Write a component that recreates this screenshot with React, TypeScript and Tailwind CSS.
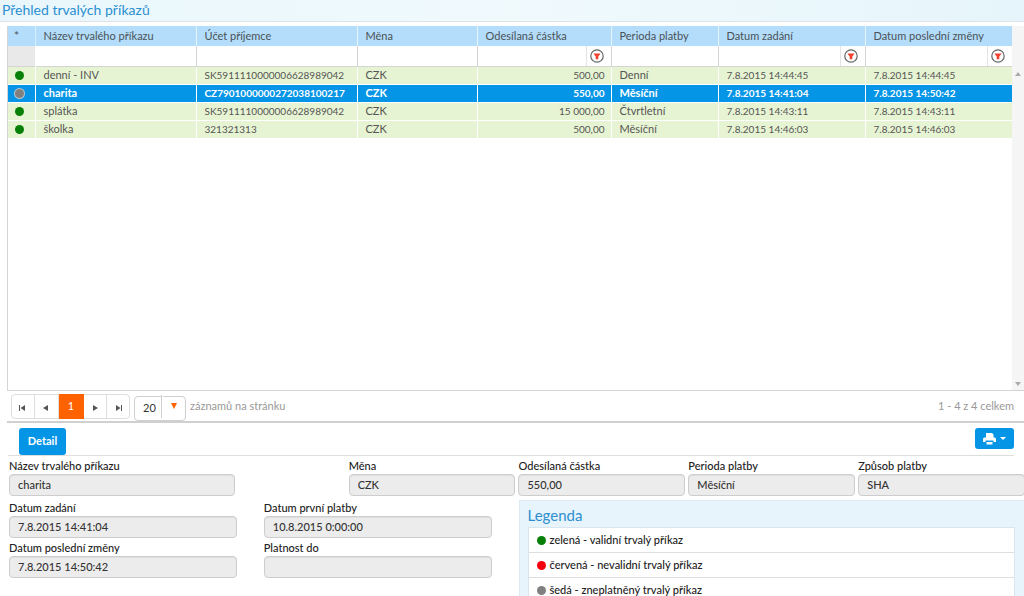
const columns = [
  { label: "Název trvalého příkazu", width: "w-[161px]", filter: false },
  { label: "Účet příjemce", width: "w-[161px]", filter: false },
  { label: "Měna", width: "w-[120px]", filter: false },
  { label: "Odesílaná částka", width: "w-[134px]", filter: true },
  { label: "Perioda platby", width: "w-[107px]", filter: false },
  { label: "Datum zadání", width: "w-[147px]", filter: true },
  { label: "Datum poslední změny", width: "w-[147px]", filter: true },
];

const orders = [
  { name: "denní - INV", account: "SK5911110000006628989042", currency: "CZK", amount: "500,00", period: "Denní", created: "7.8.2015 14:44:45", changed: "7.8.2015 14:44:45", valid: true, selected: false },
  { name: "charita", account: "CZ7901000000272038100217", currency: "CZK", amount: "550,00", period: "Měsíční", created: "7.8.2015 14:41:04", changed: "7.8.2015 14:50:42", valid: false, selected: true },
  { name: "splátka", account: "SK5911110000006628989042", currency: "CZK", amount: "15 000,00", period: "Čtvrtletní", created: "7.8.2015 14:43:11", changed: "7.8.2015 14:43:11", valid: true, selected: false },
  { name: "školka", account: "321321313", currency: "CZK", amount: "500,00", period: "Měsíční", created: "7.8.2015 14:46:03", changed: "7.8.2015 14:46:03", valid: true, selected: false },
];

const legend = [
  { color: "bg-[#078007]", text: "zelená - validní trvalý příkaz" },
  { color: "bg-[#f5000c]", text: "červená - nevalidní trvalý příkaz" },
  { color: "bg-[#808080]", text: "šedá - zneplatněný trvalý příkaz" },
];

function FilterIcon() {
  return (
    <svg viewBox="0 0 14 14" className="size-[14px]" aria-hidden="true">
      <circle cx="7" cy="7" r="6.200" fill="#fff" stroke="#666" strokeWidth="1.200" />
      <path d="M3.400 4.600h7.200L8.300 7.400v2.800H5.700V7.400z" fill="#f4402c" />
    </svg>
  );
}

function PagerIcon({ d }: { d: string }) {
  return (
    <svg viewBox="0 0 8 8" className="size-2" aria-hidden="true">
      <path d={d} fill="#555" />
    </svg>
  );
}

function PagerButton({ label, d }: { label: string; d: string }) {
  return (
    <button type="button" aria-label={label} className="flex flex-1 items-center justify-center border-r border-[#dedede] pt-[3px] last:border-r-0">
      <PagerIcon d={d} />
    </button>
  );
}

function Field({ id, label, value, className = "", inputClass = "w-full" }: { id: string; label: string; value: string; className?: string; inputClass?: string }) {
  return (
    <div className={className}>
      <label htmlFor={id} className="block text-[11px] leading-4 font-medium text-[#222]">
        {label}
      </label>
      <input
        id={id}
        readOnly
        value={value}
        className={`block h-[22px] rounded border border-[#cdcdcd] bg-[#ececec] px-2 pb-0.5 text-[11px] font-medium text-[#333] shadow-[inset_0_1px_1px_rgba(0,0,0,0.06)] ${inputClass}`}
      />
    </div>
  );
}

function OrdersTable() {
  return (
    <table className="w-full table-fixed border-collapse text-left text-[11px] text-[#555]">
      <thead>
        <tr className="h-5 bg-[#b3ddfa] text-[#4a5258]">
          <th className="w-[27px] border-r border-[#d9effd] p-0 pl-1.5 align-top text-[12px] leading-5 font-normal">*</th>
          {columns.map((c) => (
            <th key={c.label} className={`${c.width} border-r border-[#e6f4fe] p-0 pl-2 font-normal whitespace-nowrap`}>
              {c.label}
            </th>
          ))}
        </tr>
        <tr className="h-5 border-b border-[#d4d4d4]">
          <td className="bg-[#e9e9e9] p-0" />
          {columns.map((c) => (
            <td key={c.label} className="border-r border-[#d4d4d4] bg-white p-0">
              <div className="flex h-5">
                <input aria-label={`Filtr: ${c.label}`} className="min-w-0 flex-1 px-2 outline-none" />
                {c.filter && (
                  <button type="button" aria-label={`Filtrovat ${c.label}`} className="flex w-[25px] items-center justify-center border-l border-[#e4e4e4] pr-1">
                    <FilterIcon />
                  </button>
                )}
              </div>
            </td>
          ))}
        </tr>
      </thead>
      <tbody>
        {orders.map((o) => (
          <tr
            key={o.name}
            className={
              o.selected
                ? "h-[18px] border-b border-white bg-[#0595e6] font-bold text-white"
                : "h-[18px] border-b border-white bg-[#e7f4d3]"
            }
          >
            <td className="border-r border-white p-0 pl-[7px]">
              <span className={`block size-[9px] rounded-full ${o.valid ? "bg-[#078007]" : "bg-[#808080] ring-1 ring-[#b9c7d0]"}`} />
            </td>
            <td className="border-r border-white p-0 pl-2">{o.name}</td>
            <td className="border-r border-white p-0 pl-2 text-[10px]">{o.account}</td>
            <td className="border-r border-white p-0 pl-2">{o.currency}</td>
            <td className="border-r border-white p-0 pr-1.5 text-right text-[10px]">{o.amount}</td>
            <td className="border-r border-white p-0 pl-2">{o.period}</td>
            <td className="border-r border-white p-0 pl-2 text-[10px]">{o.created}</td>
            <td className="p-0 pl-2 text-[10px]">{o.changed}</td>
          </tr>
        ))}
      </tbody>
    </table>
  );
}

function Pager() {
  return (
    <div className="flex h-8 items-center border-b-2 border-[#d0d0d0] pr-2.5 pl-1">
      <nav aria-label="Stránkování" className="flex h-[25px] w-[119px] rounded-sm border border-[#dedede]">
        <PagerButton label="První" d="M0 1h1v6H0zM6 1v6L1.500 4z" />
        <PagerButton label="Předchozí" d="M6 1v6L1 4z" />
        <button type="button" aria-current="page" className="-my-px w-[25px] bg-[#ff6200] text-[11px] text-white">
          1
        </button>
        <PagerButton label="Další" d="M2 1v6l5-3z" />
        <PagerButton label="Poslední" d="M2 1v6l4.500-3zM7 1h1v6H7z" />
      </nav>
      <div className="relative ml-1 h-[25px] w-[52px]">
        <select id="page-size" defaultValue="20" className="size-full appearance-none rounded-sm border border-[#cfcfcf] bg-white pb-0.5 pl-2 text-[11px] text-[#333]">
          <option>20</option>
          <option>50</option>
        </select>
        <span className="pointer-events-none absolute inset-y-px right-px flex w-6 items-center justify-center border-x border-l-[#cfcfcf] border-r-transparent before:mr-auto before:h-full before:w-px before:bg-white">
          <svg viewBox="0 0 6 6" className="mr-auto size-1.5" aria-hidden="true">
            <path d="M0 0h6L3 6z" fill="#ff6200" />
          </svg>
        </span>
      </div>
      <label htmlFor="page-size" className="ml-1 text-[11px] text-[#999]">
        záznamů na stránku
      </label>
      <span className="ml-auto text-[11px] text-[#999]">1 - 4 z 4 celkem</span>
    </div>
  );
}

function Legend() {
  return (
    <section className="mt-1 w-1/2 border border-[#dbe9f2] bg-[#e8f4fc] pr-3 pl-2">
      <h2 className="pt-1 pb-0.5 text-[15px] leading-5 text-[#2b8fd0]">Legenda</h2>
      <ul className="border border-[#d9e6ee] bg-white">
        {legend.map((l) => (
          <li key={l.text} className="flex h-[25px] items-center gap-1 border-b border-[#dedede] pl-2 text-[11px] font-medium text-[#222] last:border-b-0">
            <span className={`size-[9px] rounded-full ${l.color}`} />
            {l.text}
          </li>
        ))}
      </ul>
    </section>
  );
}

export default function App() {
  return (
    <main className="h-screen overflow-hidden bg-white font-['Lato','Liberation_Sans',sans-serif]">
      <header className="h-[22px] border-b border-[#dfe3e5] bg-linear-to-r from-[#e9f7fc] via-[#f0fafd] to-[#e6f5fb] pl-0.5">
        <h1 className="text-[14px] leading-5 text-[#2b8fd0]">Přehled trvalých příkazů</h1>
      </header>

      <section className="mt-1 ml-[7px]">
        <div className="flex h-[365px] border-b border-l border-[#d4d4d4]">
          <div className="min-w-0 flex-1">
            <OrdersTable />
          </div>
          <div className="flex w-3 flex-col items-center justify-between bg-[#f5f5f5] pt-[46px] pb-1">
            <svg viewBox="0 0 6 4" className="w-1.5" aria-hidden="true">
              <path d="M0 4h6L3 0z" fill="#aaa" />
            </svg>
            <svg viewBox="0 0 6 4" className="w-1.5" aria-hidden="true">
              <path d="M0 0h6L3 4z" fill="#aaa" />
            </svg>
          </div>
        </div>
        <Pager />
      </section>

      <div className="mt-[5px] mr-2.5 ml-2 flex items-start justify-between border-b border-[#dedede] pl-[11px]">
        <button type="button" className="h-[27px] w-[47px] rounded-[3px] bg-[#0595e6] text-[11px] font-bold text-white">
          Detail
        </button>
        <button type="button" aria-label="Tisk" className="flex h-[21px] w-[39px] items-center justify-center gap-1 rounded-[3px] bg-[#0595e6]">
          <svg viewBox="0 0 13 12" className="w-[13px]" fill="#fff" aria-hidden="true">
            <path d="M3 0h6l1.500 1.500V4.500h-7.500zM1.500 4.500h10Q13 4.500 13 6v3h-2.500V7.500h-8V9H0V6q0-1.500 1.500-1.500zM3.500 9h6v2.500h-6z" />
          </svg>
          <svg viewBox="0 0 6 3" className="w-1.5" fill="#fff" aria-hidden="true">
            <path d="M0 0h6L3 3z" />
          </svg>
        </button>
      </div>

      <div className="-mr-1 ml-[9px] grid grid-cols-6 pt-0.5">
        <Field id="name" label="Název trvalého příkazu" value="charita" className="col-span-2" inputClass="w-2/3" />
        <Field id="currency" label="Měna" value="CZK" className="pr-[3px]" />
        <Field id="amount" label="Odesílaná částka" value="550,00" className="pr-[3px]" />
        <Field id="period" label="Perioda platby" value="Měsíční" className="pr-[3px]" />
        <Field id="method" label="Způsob platby" value="SHA" className="pr-[3px]" />
      </div>

      <div className="-mr-1 ml-[9px] flex items-start">
        <div className="grid w-1/2 grid-cols-2 gap-y-0.5 pt-1">
          <Field id="created" label="Datum zadání" value="7.8.2015 14:41:04" className="pr-[27px]" />
          <Field id="first" label="Datum první platby" value="10.8.2015 0:00:00" className="pr-[27px]" />
          <Field id="changed" label="Datum poslední změny" value="7.8.2015 14:50:42" className="pr-[27px]" />
          <Field id="until" label="Platnost do" value="" className="pr-[27px]" />
        </div>
        <Legend />
      </div>
    </main>
  );
}
